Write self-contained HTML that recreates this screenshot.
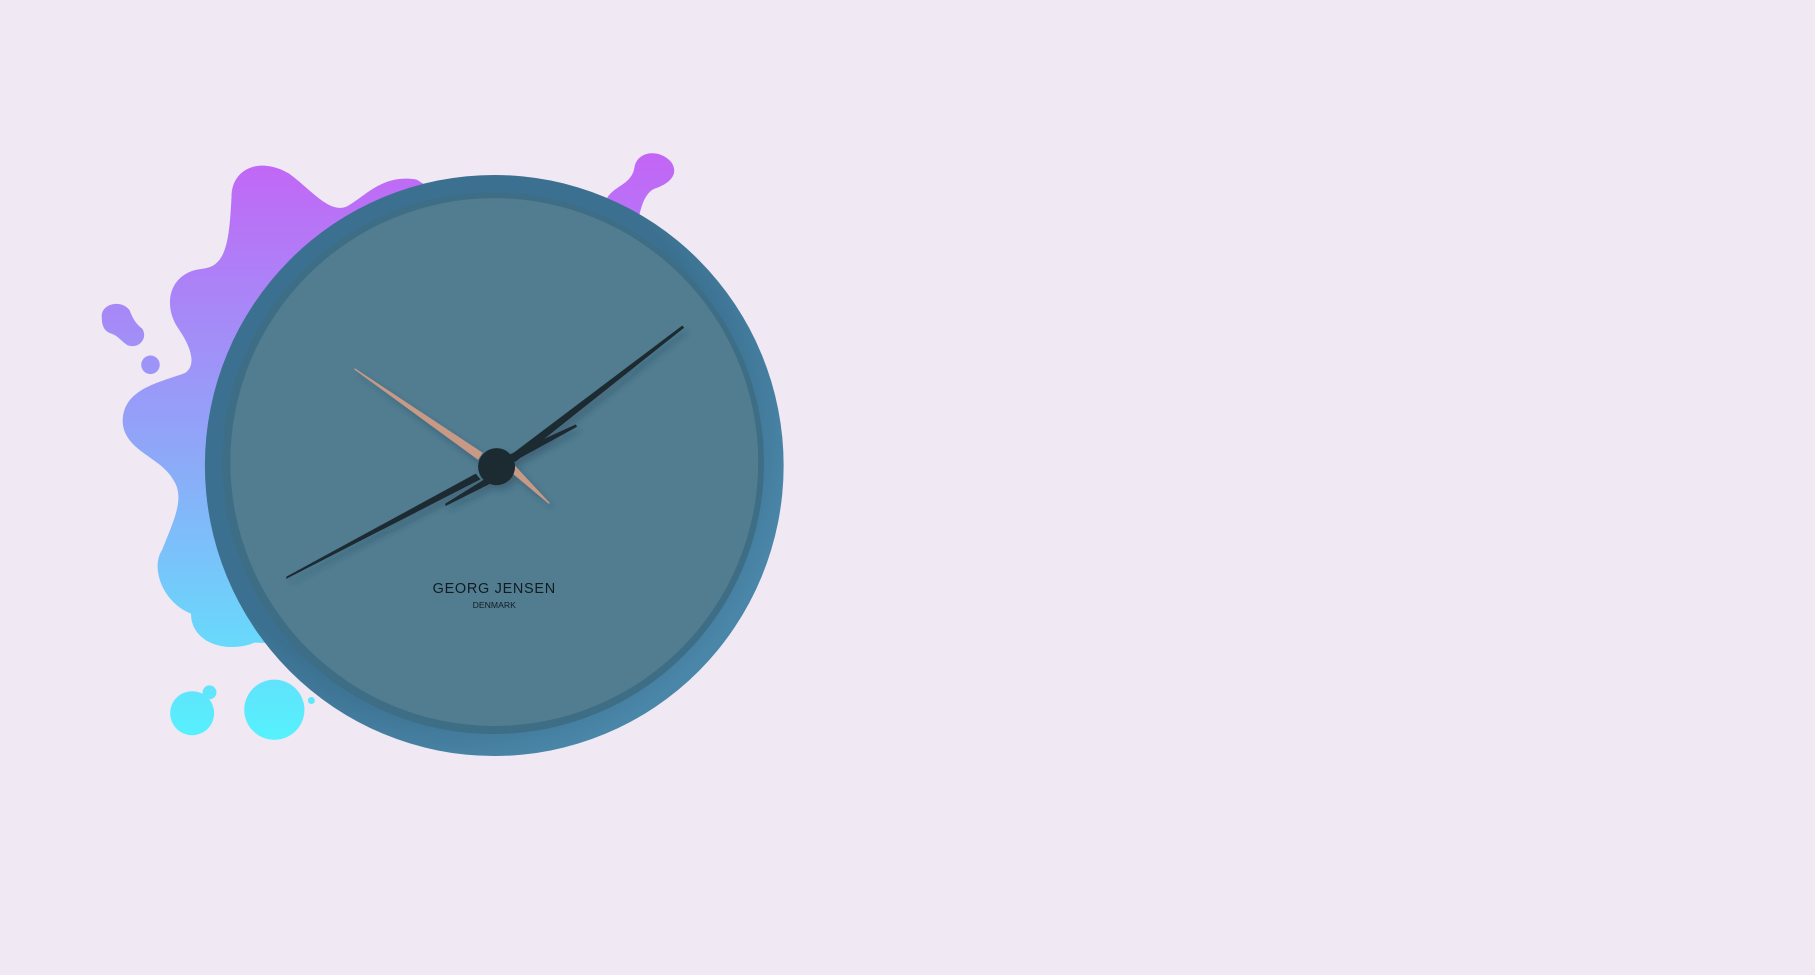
<!DOCTYPE html>
<html><head><meta charset="utf-8"><style>
html,body{margin:0;padding:0;background:#f0e8f3;width:1815px;height:975px;overflow:hidden}
svg{display:block}
</style></head><body>
<svg width="1815" height="975" viewBox="0 0 1568 842" xmlns="http://www.w3.org/2000/svg">
<defs>
<linearGradient id="g" x1="0" y1="130" x2="0" y2="640" gradientUnits="userSpaceOnUse">
<stop offset="0" stop-color="#c464f6"/><stop offset="0.5" stop-color="#8fa6f8"/><stop offset="1" stop-color="#55f2fd"/>
</linearGradient>
<radialGradient id="rim" cx="0.42" cy="0.42" r="0.6">
<stop offset="0.8" stop-color="#3b7090"/><stop offset="1" stop-color="#4a86a8"/>
</radialGradient>
<filter id="sh" x="-20%" y="-20%" width="140%" height="140%"><feDropShadow dx="3" dy="4" stdDeviation="3" flood-color="#1d3646" flood-opacity="0.35"/></filter>
</defs>
<rect width="1568" height="842" fill="#f0e8f3"/>
<g fill="url(#g)">
<path d="M200,170 C200,145 225,135 250,150 C270,165 285,185 300,178 C315,170 330,150 360,155 L430,200 L430,560 L220,555 C195,565 165,555 165,530 C140,520 130,490 140,475 C150,450 160,430 150,415 C140,395 108,390 106,365 C105,335 140,330 160,322 C170,315 165,300 155,285 C140,265 145,235 175,232 C195,230 198,210 200,170 Z"/>
<path d="M522,178 C525,160 545,162 548,145 C550,130 570,128 580,140 C588,152 575,160 565,163 C555,168 552,185 550,200 L520,200 Z"/>
<path d="M88,275 C86,262 105,258 112,268 C115,276 118,280 123,284 C128,292 120,302 110,298 C104,294 102,290 96,288 C90,286 88,281 88,275 Z"/>
<circle cx="130" cy="315" r="8"/>
<circle cx="166" cy="616" r="19"/><circle cx="181" cy="598" r="6"/>
<circle cx="237" cy="613" r="26"/><circle cx="269" cy="605" r="3"/>
</g>
<ellipse cx="427" cy="402" rx="250" ry="251" fill="url(#rim)"/>
<ellipse cx="426" cy="400" rx="234" ry="234" fill="#3e6e86"/>
<circle cx="427" cy="399" r="228" fill="#527d91"/>
<text x="427" y="512" text-anchor="middle" font-family="Liberation Sans, sans-serif" font-size="12.5" fill="#111c22" letter-spacing="0.6">GEORG JENSEN</text>
<text x="427" y="525" text-anchor="middle" font-family="Liberation Sans, sans-serif" font-size="7.5" fill="#111c22">DENMARK</text>
<g filter="url(#sh)">
<polygon points="247,500 247.5,498 411,409 415,414" fill="#1f2a30"/>
<polygon points="441,393 589.5,281 591,283 445,399" fill="#1f2a30"/>
<polygon points="385,437 384.5,435 420,413 423,418" fill="#1f2a30"/>
<polygon points="437,394 497.5,366.5 498.5,368.5 441,400" fill="#1f2a30"/>
<polygon points="306,319 306.5,318 417,391 413,397" fill="#c89a86"/>
<polygon points="437,404 442,399 475,434.5 474,435" fill="#c89a86"/>
<circle cx="429" cy="403" r="16" fill="#1f2a30"/>
</g>
</svg>
</body></html>
